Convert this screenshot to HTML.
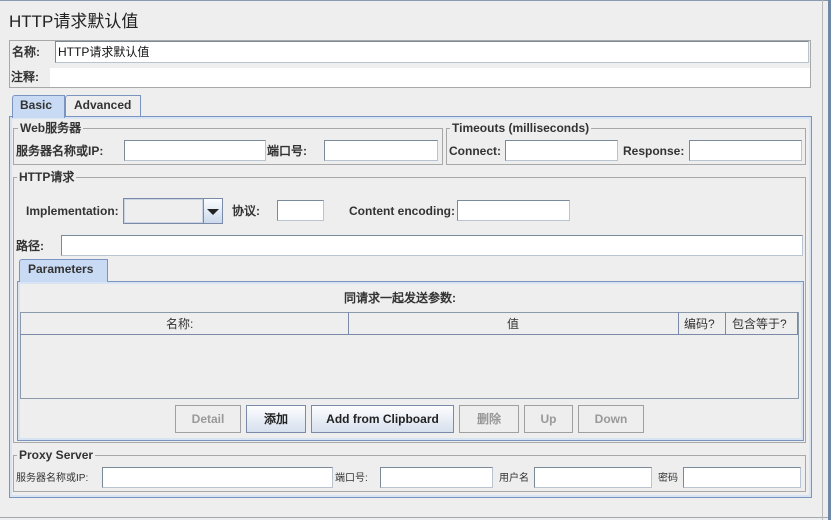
<!DOCTYPE html>
<html><head><meta charset="utf-8"><style>
*{box-sizing:border-box;margin:0;padding:0}
body{width:831px;height:520px;background:#eeeeee;position:relative;overflow:hidden;font-family:"Liberation Sans","WenQuanYi Zen Hei",sans-serif;font-size:12px;color:#333}
.a{position:absolute}
.l{position:absolute;font-weight:bold;font-size:12px;white-space:nowrap;line-height:14px}
.f{position:absolute;background:#fff;border:1px solid #7a8a99;border-right-color:#b8c4cf;border-bottom-color:#b8c4cf}
.g{position:absolute;border:1px solid #a8a8a8}
.gt{position:absolute;background:#eee;padding:0 2px;font-weight:bold;font-size:12px;line-height:14px;white-space:nowrap}
.b{position:absolute;border:1px solid #a0a0a0;font-weight:bold;text-align:center;line-height:26px;color:#999;background:#eee}
.bb{border-color:#7a8aa8;color:#222;background:linear-gradient(#fdfdfe,#d6e0ee)}
.s{position:absolute;font-size:10px;white-space:nowrap;line-height:12px}
</style></head><body>
<div class="a" style="left:0;top:0;width:831px;height:1px;background:#8a9ab0"></div>
<div class="a" style="left:0;top:517px;width:831px;height:1px;background:#a0a8b0"></div>
<div class="a" style="left:822px;top:0;width:1px;height:520px;background:#b8b8b8"></div>
<div class="a" style="left:828px;top:0;width:3px;height:520px;background:#7088a8"></div>
<div class="a" style="left:9px;top:12px;font-size:17px;line-height:20px;color:#222">HTTP请求默认值</div>

<div class="g" style="left:9px;top:40px;width:802px;height:48px"></div>
<div class="l" style="left:12px;top:45px">名称:</div>
<div class="f" style="left:55px;top:41px;width:754px;height:22px;font-size:12px;line-height:20px;padding-left:2px;color:#111">HTTP请求默认值</div>
<div class="l" style="left:11px;top:70px">注释:</div>
<div class="a" style="left:50px;top:68px;width:760px;height:19px;background:#fff"></div>

<div class="a" style="left:9px;top:116px;width:803px;height:382px;border:1px solid #7a94c0;box-shadow:inset 0 0 0 2px #d8e4f4"></div>
<div class="a" style="left:12px;top:95px;width:53px;height:23px;background:#c8daf4;border:1px solid #7a94c0;border-bottom:none;border-radius:3px 0 0 0"></div>
<div class="l" style="left:20px;top:98px">Basic</div>
<div class="a" style="left:65px;top:95px;width:76px;height:21px;border:1px solid #7a94c0;border-bottom:none;border-radius:3px 0 0 0"></div>
<div class="l" style="left:74px;top:98px">Advanced</div>

<div class="g" style="left:13px;top:128px;width:430px;height:37px"></div>
<div class="gt" style="left:18px;top:121px">Web服务器</div>
<div class="l" style="left:16px;top:144px">服务器名称或IP:</div>
<div class="f" style="left:124px;top:140px;width:142px;height:21px"></div>
<div class="l" style="left:267px;top:144px">端口号:</div>
<div class="f" style="left:324px;top:140px;width:114px;height:21px"></div>

<div class="g" style="left:446px;top:128px;width:360px;height:37px"></div>
<div class="gt" style="left:450px;top:121px">Timeouts (milliseconds)</div>
<div class="l" style="left:449px;top:144px">Connect:</div>
<div class="f" style="left:505px;top:140px;width:113px;height:21px"></div>
<div class="l" style="left:623px;top:144px">Response:</div>
<div class="f" style="left:689px;top:140px;width:113px;height:21px"></div>

<div class="g" style="left:13px;top:177px;width:793px;height:266px"></div>
<div class="gt" style="left:17px;top:170px">HTTP请求</div>
<div class="l" style="left:26px;top:204px">Implementation:</div>
<div class="a" style="left:123px;top:198px;width:100px;height:26px;border:1px solid #7a8aa8;background:#eee"></div>
<div class="a" style="left:124px;top:199px;width:79px;height:24px;border:1px solid #c8d4e4"></div>
<div class="a" style="left:203px;top:199px;width:19px;height:24px;border-left:1px solid #7a8aa8;background:linear-gradient(#fafcfe,#ccd9ec)"></div>
<div class="a" style="left:207px;top:209px;width:0;height:0;border-left:6px solid transparent;border-right:6px solid transparent;border-top:6px solid #222"></div>
<div class="l" style="left:232px;top:204px">协议:</div>
<div class="f" style="left:277px;top:200px;width:47px;height:21px"></div>
<div class="l" style="left:349px;top:204px">Content encoding:</div>
<div class="f" style="left:457px;top:200px;width:113px;height:21px"></div>
<div class="l" style="left:16px;top:239px">路径:</div>
<div class="f" style="left:61px;top:235px;width:742px;height:21px"></div>

<div class="a" style="left:17px;top:281px;width:787px;height:160px;border:1px solid #7a94c0;box-shadow:inset 0 0 0 2px #d8e4f4"></div>
<div class="a" style="left:19px;top:259px;width:89px;height:23px;background:#c8daf4;border:1px solid #7a94c0;border-bottom:none;border-radius:3px 0 0 0"></div>
<div class="l" style="left:28px;top:262px">Parameters</div>
<div class="l" style="left:344px;top:291px">同请求一起发送参数:</div>
<div class="a" style="left:20px;top:312px;width:779px;height:87px;border:1px solid #8a9aaa"></div>
<div class="a" style="left:20px;top:312px;width:778px;height:23px;border-bottom:1px solid #7a8aa8"></div>
<div class="a" style="left:348px;top:312px;width:1px;height:23px;background:#7a8aa8"></div>
<div class="a" style="left:678px;top:312px;width:1px;height:23px;background:#7a8aa8"></div>
<div class="a" style="left:725px;top:312px;width:1px;height:23px;background:#7a8aa8"></div>
<div class="a" style="left:797px;top:312px;width:1px;height:23px;background:#7a8aa8"></div>
<div class="s" style="left:166px;top:317px;font-size:12px;line-height:14px">名称:</div>
<div class="s" style="left:507px;top:317px;font-size:12px;line-height:14px">值</div>
<div class="s" style="left:684px;top:317px;font-size:12px;line-height:14px">编码?</div>
<div class="s" style="left:732px;top:317px;font-size:12px;line-height:14px">包含等于?</div>

<div class="b" style="left:175px;top:405px;width:66px;height:28px">Detail</div>
<div class="b bb" style="left:246px;top:405px;width:60px;height:28px">添加</div>
<div class="b bb" style="left:311px;top:405px;width:143px;height:28px">Add from Clipboard</div>
<div class="b" style="left:459px;top:405px;width:60px;height:28px">删除</div>
<div class="b" style="left:524px;top:405px;width:49px;height:28px">Up</div>
<div class="b" style="left:578px;top:405px;width:66px;height:28px">Down</div>

<div class="g" style="left:13px;top:455px;width:793px;height:37px"></div>
<div class="gt" style="left:17px;top:448px">Proxy Server</div>
<div class="s" style="left:16px;top:473px">服务器名称或IP:</div>
<div class="f" style="left:102px;top:467px;width:231px;height:21px"></div>
<div class="s" style="left:335px;top:473px">端口号:</div>
<div class="f" style="left:380px;top:467px;width:113px;height:21px"></div>
<div class="s" style="left:499px;top:473px">用户名</div>
<div class="f" style="left:534px;top:467px;width:118px;height:21px"></div>
<div class="s" style="left:658px;top:473px">密码</div>
<div class="f" style="left:683px;top:467px;width:118px;height:21px"></div>
</body></html>
